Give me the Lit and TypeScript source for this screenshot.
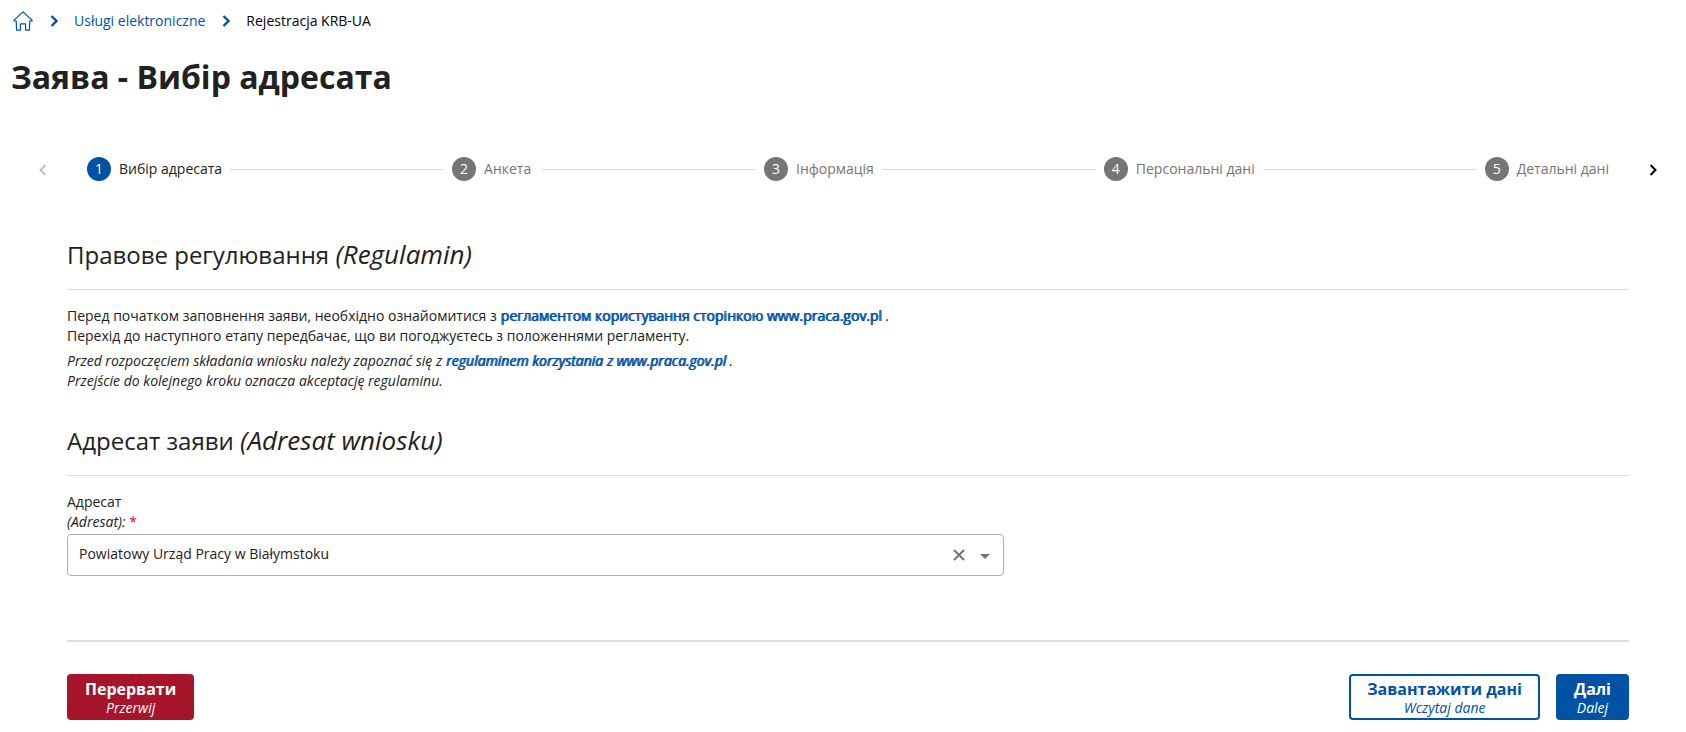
import { LitElement, html, css, svg } from "lit";
import { customElement, state } from "lit/decorators.js";

const chevron = (direction: "left" | "right", width: number) => svg`
  <svg class="chevron" width="8" height="12" viewBox="0 0 8 12" aria-hidden="true">
    <path d=${direction === "right" ? "M1.5 1 L6.5 6 L1.5 11" : "M6.5 1 L1.5 6 L6.5 11"}
      fill="none" stroke="currentColor" stroke-width=${width}></path>
  </svg>`;

@customElement("app-breadcrumbs")
export class AppBreadcrumbs extends LitElement {
  static styles = css`
    :host { display: block; }
    .trail {
      display: flex;
      align-items: center;
      height: 42px;
      padding-left: 13px;
      font-size: 14px;
      line-height: 20px;
      color: #000;
    }
    .link { color: #0052a5; text-decoration: none; display: flex; }
    .separator { display: flex; color: #0052a5; padding: 0 16px 0 17px; }
    .current { white-space: nowrap; }
  `;

  render() {
    return html`
      <nav class="trail" aria-label="Breadcrumb">
        <a class="link" href="#" aria-label="Start">
          <svg width="20" height="20" viewBox="0 0 20 20" fill="none" stroke="currentColor" stroke-width="1.2" stroke-linejoin="round">
            <path d="M3.2 10 L1.2 10 L0.8 9.4 L10 0.9 L19.2 9.4 L18.8 10 L16.8 10 L16.4 19.1 L12.6 19.1 L12.6 12.8 L7.4 12.8 L7.4 19.1 L3.6 19.1 Z"></path>
          </svg>
        </a>
        <span class="separator">${chevron("right", 2.4)}</span>
        <a class="link" href="#">Usługi elektroniczne</a>
        <span class="separator">${chevron("right", 2.4)}</span>
        <span class="current" aria-current="page">Rejestracja KRB-UA</span>
      </nav>
    `;
  }
}

@customElement("app-stepper")
export class AppStepper extends LitElement {
  static styles = css`
    :host { display: block; }
    .stepper { display: flex; align-items: center; height: 72px; }
    .pager {
      border: 0;
      background: none;
      padding: 2px 2px 0 0;
      width: 87px;
      display: flex;
      justify-content: center;
      color: #000;
    }
    .pager.next { width: 64px; }
    .pager:disabled { color: #bdbdbd; }
    .steps {
      flex: 1;
      display: flex;
      align-items: center;
      gap: 8px;
      margin: 0 13px 0 0;
      padding: 0;
      list-style: none;
    }
    .step {
      display: flex;
      align-items: center;
      gap: 8px;
      font-size: 14px;
      line-height: 20px;
      color: #757575;
    }
    .step:not(:last-child) { flex: 1 1 auto; }
    .step.active { color: #212121; }
    .number {
      flex: none;
      width: 24px;
      height: 24px;
      border-radius: 50%;
      background: #757575;
      color: #fff;
      line-height: 24px;
      text-align: center;
    }
    .active .number { background: #0052a5; }
    .label { min-width: 50px; white-space: nowrap; }
    .line { flex: 1; height: 1px; background: #dedede; }
  `;

  private steps = ["Вибір адресата", "Анкета", "Інформація", "Персональні дані", "Детальні дані"];

  render() {
    return html`
      <div class="stepper">
        <button class="pager" disabled aria-label="Poprzednie">${chevron("left", 1.8)}</button>
        <ol class="steps">
          ${this.steps.map(
            (label, i) => html`
              <li class="step ${i === 0 ? "active" : ""}">
                <span class="number">${i + 1}</span>
                <span class="label">${label}</span>
                ${i < this.steps.length - 1 ? html`<span class="line"></span>` : ""}
              </li>
            `
          )}
        </ol>
        <button class="pager next" aria-label="Następne">${chevron("right", 2)}</button>
      </div>
    `;
  }
}

@customElement("app-root")
export class AppRoot extends LitElement {
  static styles = css`
    :host {
      display: block;
      font-family: "Open Sans", "Noto Sans", sans-serif;
      font-size: 14px;
      line-height: 20px;
      color: #212121;
      background: #fff;
    }
    .title {
      margin: 11px 11px 0;
      font-size: 32px;
      line-height: 48px;
      font-weight: 700;
    }
    .steps { margin-top: 32px; }
    .content { margin: 32px 57px 0 67px; }
    .heading {
      margin: 0;
      padding-bottom: 16px;
      border-bottom: 1px solid #dedede;
      font-size: 24px;
      line-height: 36px;
      font-weight: 400;
    }
    .foreign { font-size: 26px; line-height: 1; }
    .text { margin: 16px 0 0; }
    .translation { margin: 5px 0 0; font-style: italic; }
    .strong {
      color: #0052a5;
      text-decoration: none;
      text-shadow: 1px 0 0 #0052a5;
    }
    .section + .section { margin-top: 32px; }
    .label { display: block; margin-top: 16px; }
    .label-small { display: block; font-style: italic; }
    .required { color: #dc0032; font-style: normal; }
    .field { position: relative; width: 60%; margin-top: 2px; }
    .select {
      display: block;
      box-sizing: border-box;
      width: 100%;
      height: 42px;
      padding: 0 72px 2px 11px;
      border: 1px solid #b0b0b0;
      border-radius: 4px;
      appearance: none;
      background: #fff;
      font: inherit;
      color: inherit;
    }
    .tools {
      position: absolute;
      top: 0;
      right: 14px;
      height: 42px;
      display: flex;
      align-items: center;
      gap: 15px;
      color: #757575;
      pointer-events: none;
    }
    .clear {
      display: flex;
      padding: 0;
      border: 0;
      background: none;
      color: inherit;
      pointer-events: auto;
    }
    .arrow { margin-top: 2px; }
    .actions {
      display: flex;
      gap: 16px;
      margin-top: 64px;
      padding-top: 32px;
      border-top: 2px solid #dedede;
    }
    .button {
      box-sizing: border-box;
      height: 46px;
      padding: 0 16px;
      border: 2px solid #0052a5;
      border-radius: 4px;
      background: #0052a5;
      color: #fff;
      font: inherit;
      font-size: 16px;
      font-weight: 700;
      text-align: center;
    }
    .button.danger { margin-right: auto; background: #a6152a; border-color: #a6152a; }
    .button.outline { background: #fff; color: #0052a5; }
    .main { display: block; line-height: 22px; }
    .sub { display: block; font-size: 14px; line-height: 16px; font-weight: 400; font-style: italic; }
  `;

  @state() private office = "bialystok";

  private button(kind: string, main: string, sub: string) {
    return html`<button class="button ${kind}" type="button">
      <span class="main">${main}</span><span class="sub">${sub}</span>
    </button>`;
  }

  render() {
    return html`
      <app-breadcrumbs></app-breadcrumbs>
      <h1 class="title">Заява - Вибір адресата</h1>
      <app-stepper class="steps"></app-stepper>
      <main class="content">
        <section class="section">
          <h2 class="heading">Правове регулювання <i class="foreign">(Regulamin)</i></h2>
          <p class="text">
            Перед початком заповнення заяви, необхідно ознайомитися з
            <a class="strong" href="#">регламентом користування сторінкою www.praca.gov.pl</a> .<br />
            Перехід до наступного етапу передбачає, що ви погоджуєтесь з положеннями регламенту.
          </p>
          <p class="translation">
            Przed rozpoczęciem składania wniosku należy zapoznać się z
            <a class="strong" href="#">regulaminem korzystania z www.praca.gov.pl</a> .<br />
            Przejście do kolejnego kroku oznacza akceptację regulaminu.
          </p>
        </section>
        <section class="section">
          <h2 class="heading">Адресат заяви <i class="foreign">(Adresat wniosku)</i></h2>
          <label class="label" for="office">
            Адресат
            <span class="label-small">(Adresat): <span class="required">*</span></span>
          </label>
          <div class="field">
            <select class="select" id="office" required .value=${this.office}
              @change=${(e: Event) => (this.office = (e.target as HTMLSelectElement).value)}>
              <option value="bialystok" selected>Powiatowy Urząd Pracy w Białymstoku</option>
              <option value=""></option>
            </select>
            <div class="tools">
              <button class="clear" type="button" aria-label="Wyczyść" @click=${() => (this.office = "")}>
                <svg width="12" height="12" viewBox="0 0 12 12" aria-hidden="true">
                  <path d="M1 1 L11 11 M11 1 L1 11" stroke="currentColor" stroke-width="2"></path>
                </svg>
              </button>
              <svg class="arrow" width="10" height="5" viewBox="0 0 10 5" aria-hidden="true">
                <path d="M0 0 H10 L5 5 Z" fill="currentColor"></path>
              </svg>
            </div>
          </div>
        </section>
        <div class="actions">
          ${this.button("danger", "Перервати", "Przerwij")}
          ${this.button("outline", "Завантажити дані", "Wczytaj dane")}
          ${this.button("", "Далі", "Dalej")}
        </div>
      </main>
    `;
  }
}
